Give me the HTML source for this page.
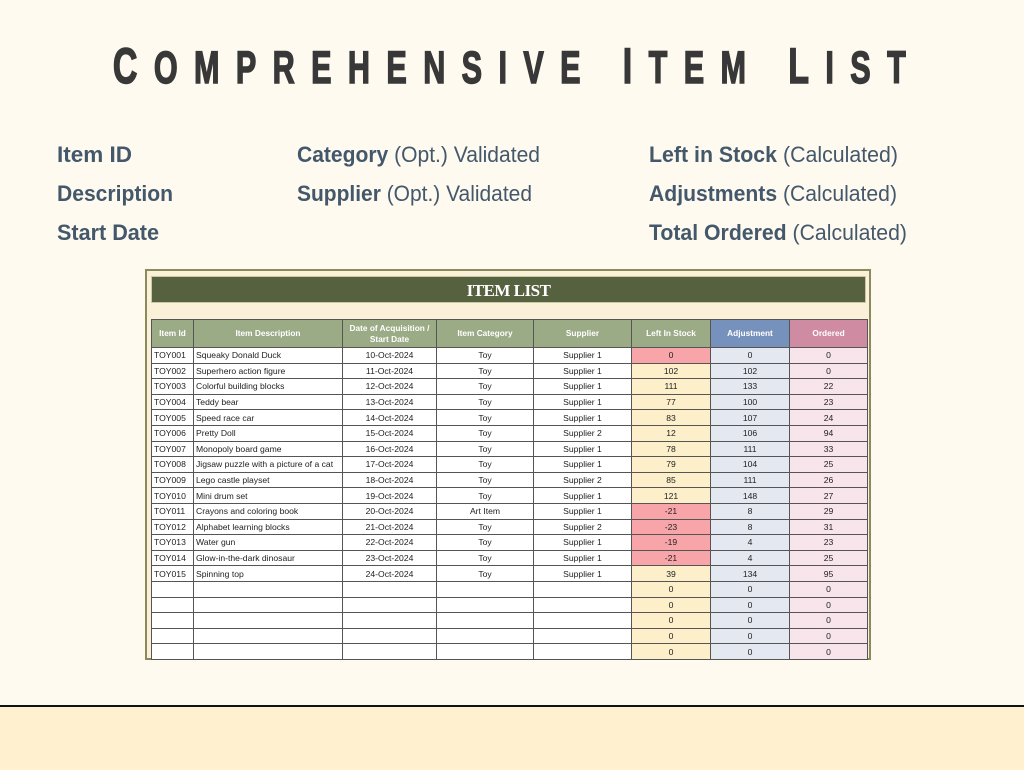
<!DOCTYPE html>
<html><head><meta charset="utf-8"><style>
html,body{margin:0;padding:0}
body{width:1024px;height:768px;background:#fefaef;position:relative;overflow:hidden;font-family:"Liberation Sans",sans-serif}
svg.t{position:absolute;left:0;top:0}
.band{position:absolute;left:0;top:705px;width:1024px;height:63px;background:#fff1cf;border-top:2px solid #111}
.box{position:absolute;left:145px;top:269px;width:722px;height:387px;border:2px solid #8a8a5c;background:#fbf1d8}
.bar{position:absolute;left:151px;top:276px;width:715px;height:27px;background:#566140;border:1px solid #c9c8a8;box-sizing:border-box;color:#fff;text-align:center;font-family:"Liberation Serif",serif;font-weight:bold;font-size:17px;line-height:27px;letter-spacing:-0.5px}
table{position:absolute;left:151px;top:319px;width:716px;border-collapse:collapse;table-layout:fixed;font-size:8.6px;color:#222}
td,th{border:1px solid #555;padding:0 2px;height:14.6px;line-height:14px;white-space:nowrap;overflow:hidden}
th{height:27px;line-height:11px;background:#9bab86;color:#fff;font-size:8.3px;font-weight:bold;white-space:normal}
th.b{background:#7692bc}th.p{background:#cf8ba2}
td{background:#fff}
td.c{text-align:center}
td.s{background:#fcefca;text-align:center}
td.r{background:#f8a5a9;text-align:center}
td.a{background:#e4e8f0;text-align:center}
td.o{background:#f8e4eb;text-align:center}
</style></head><body>
<svg class="t" width="1024" height="260" xmlns="http://www.w3.org/2000/svg">
<text transform="scale(0.68,1)" x="166" y="83" textLength="1166" lengthAdjust="spacing" font-family="Liberation Sans" font-weight="bold" font-size="50" fill="#383838" stroke="#383838" stroke-width="1.5">C<tspan font-size="45">OMPREHENSIVE</tspan> I<tspan font-size="45">TEM</tspan> L<tspan font-size="45">IST</tspan></text>
<g font-family="Liberation Sans" font-size="22" fill="#44586b">
<text x="57" y="162" textLength="75" lengthAdjust="spacingAndGlyphs" font-weight="bold">Item  ID</text>
<text x="57" y="201" textLength="116" lengthAdjust="spacingAndGlyphs" font-weight="bold">Description</text>
<text x="57" y="240" textLength="102" lengthAdjust="spacingAndGlyphs" font-weight="bold">Start Date</text>
<text x="297" y="162" textLength="243" lengthAdjust="spacingAndGlyphs"><tspan font-weight="bold">Category</tspan> (Opt.) Validated</text>
<text x="297" y="201" textLength="235" lengthAdjust="spacingAndGlyphs"><tspan font-weight="bold">Supplier</tspan> (Opt.) Validated</text>
<text x="649" y="162" textLength="249" lengthAdjust="spacingAndGlyphs"><tspan font-weight="bold">Left in Stock</tspan> (Calculated)</text>
<text x="649" y="201" textLength="248" lengthAdjust="spacingAndGlyphs"><tspan font-weight="bold">Adjustments</tspan> (Calculated)</text>
<text x="649" y="240" textLength="258" lengthAdjust="spacingAndGlyphs"><tspan font-weight="bold">Total Ordered</tspan> (Calculated)</text>
</g></svg>
<div class="box"></div>
<div class="bar">ITEM LIST</div>
<table>
<colgroup><col style="width:42px"><col style="width:149px"><col style="width:94px"><col style="width:97px"><col style="width:98px"><col style="width:79px"><col style="width:79px"><col style="width:78px"></colgroup>
<tr><th>Item Id</th><th>Item Description</th><th>Date of Acquisition / Start Date</th><th>Item Category</th><th>Supplier</th><th>Left In Stock</th><th class="b">Adjustment</th><th class="p">Ordered</th></tr>
<tr><td>TOY001</td><td>Squeaky Donald Duck</td><td class="c">10-Oct-2024</td><td class="c">Toy</td><td class="c">Supplier 1</td><td class="r">0</td><td class="a">0</td><td class="o">0</td></tr>
<tr><td>TOY002</td><td>Superhero action figure</td><td class="c">11-Oct-2024</td><td class="c">Toy</td><td class="c">Supplier 1</td><td class="s">102</td><td class="a">102</td><td class="o">0</td></tr>
<tr><td>TOY003</td><td>Colorful building blocks</td><td class="c">12-Oct-2024</td><td class="c">Toy</td><td class="c">Supplier 1</td><td class="s">111</td><td class="a">133</td><td class="o">22</td></tr>
<tr><td>TOY004</td><td>Teddy bear</td><td class="c">13-Oct-2024</td><td class="c">Toy</td><td class="c">Supplier 1</td><td class="s">77</td><td class="a">100</td><td class="o">23</td></tr>
<tr><td>TOY005</td><td>Speed race car</td><td class="c">14-Oct-2024</td><td class="c">Toy</td><td class="c">Supplier 1</td><td class="s">83</td><td class="a">107</td><td class="o">24</td></tr>
<tr><td>TOY006</td><td>Pretty Doll</td><td class="c">15-Oct-2024</td><td class="c">Toy</td><td class="c">Supplier 2</td><td class="s">12</td><td class="a">106</td><td class="o">94</td></tr>
<tr><td>TOY007</td><td>Monopoly board game</td><td class="c">16-Oct-2024</td><td class="c">Toy</td><td class="c">Supplier 1</td><td class="s">78</td><td class="a">111</td><td class="o">33</td></tr>
<tr><td>TOY008</td><td>Jigsaw puzzle with a picture of a cat</td><td class="c">17-Oct-2024</td><td class="c">Toy</td><td class="c">Supplier 1</td><td class="s">79</td><td class="a">104</td><td class="o">25</td></tr>
<tr><td>TOY009</td><td>Lego castle playset</td><td class="c">18-Oct-2024</td><td class="c">Toy</td><td class="c">Supplier 2</td><td class="s">85</td><td class="a">111</td><td class="o">26</td></tr>
<tr><td>TOY010</td><td>Mini drum set</td><td class="c">19-Oct-2024</td><td class="c">Toy</td><td class="c">Supplier 1</td><td class="s">121</td><td class="a">148</td><td class="o">27</td></tr>
<tr><td>TOY011</td><td>Crayons and coloring book</td><td class="c">20-Oct-2024</td><td class="c">Art Item</td><td class="c">Supplier 1</td><td class="r">-21</td><td class="a">8</td><td class="o">29</td></tr>
<tr><td>TOY012</td><td>Alphabet learning blocks</td><td class="c">21-Oct-2024</td><td class="c">Toy</td><td class="c">Supplier 2</td><td class="r">-23</td><td class="a">8</td><td class="o">31</td></tr>
<tr><td>TOY013</td><td>Water gun</td><td class="c">22-Oct-2024</td><td class="c">Toy</td><td class="c">Supplier 1</td><td class="r">-19</td><td class="a">4</td><td class="o">23</td></tr>
<tr><td>TOY014</td><td>Glow-in-the-dark dinosaur</td><td class="c">23-Oct-2024</td><td class="c">Toy</td><td class="c">Supplier 1</td><td class="r">-21</td><td class="a">4</td><td class="o">25</td></tr>
<tr><td>TOY015</td><td>Spinning top</td><td class="c">24-Oct-2024</td><td class="c">Toy</td><td class="c">Supplier 1</td><td class="s">39</td><td class="a">134</td><td class="o">95</td></tr>
<tr><td></td><td></td><td></td><td></td><td></td><td class="s">0</td><td class="a">0</td><td class="o">0</td></tr>
<tr><td></td><td></td><td></td><td></td><td></td><td class="s">0</td><td class="a">0</td><td class="o">0</td></tr>
<tr><td></td><td></td><td></td><td></td><td></td><td class="s">0</td><td class="a">0</td><td class="o">0</td></tr>
<tr><td></td><td></td><td></td><td></td><td></td><td class="s">0</td><td class="a">0</td><td class="o">0</td></tr>
<tr><td></td><td></td><td></td><td></td><td></td><td class="s">0</td><td class="a">0</td><td class="o">0</td></tr>
</table>
<div class="band"></div>
</body></html>
